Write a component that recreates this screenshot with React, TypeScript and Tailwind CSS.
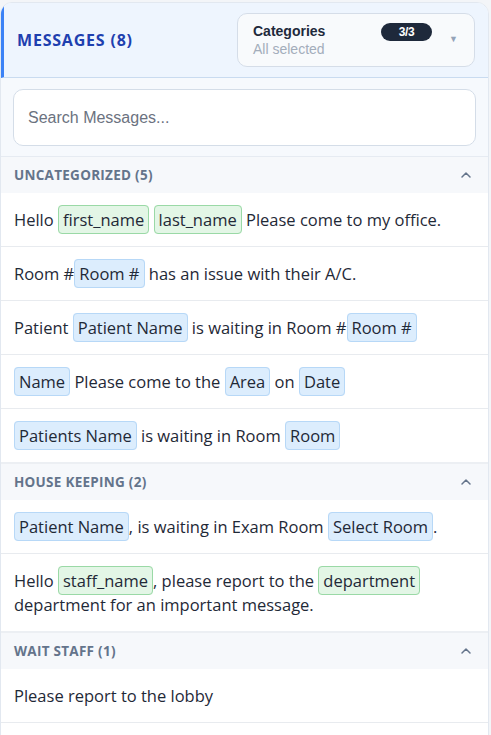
import { ChevronUp } from 'lucide-react';

type Part = string | { tag: string; color: 'blue' | 'green' };

interface Group {
  title: string;
  messages: Part[][];
}

const groups: Group[] = [
  {
    title: 'Uncategorized',
    messages: [
      ['Hello ', { tag: 'first_name', color: 'green' }, ' ', { tag: 'last_name', color: 'green' }, ' Please come to my office.'],
      ['Room #', { tag: 'Room #', color: 'blue' }, ' has an issue with their A/C.'],
      ['Patient ', { tag: 'Patient Name', color: 'blue' }, ' is waiting in Room #', { tag: 'Room #', color: 'blue' }],
      [{ tag: 'Name', color: 'blue' }, ' Please come to the ', { tag: 'Area', color: 'blue' }, ' on ', { tag: 'Date', color: 'blue' }],
      [{ tag: 'Patients Name', color: 'blue' }, ' is waiting in Room ', { tag: 'Room', color: 'blue' }],
    ],
  },
  {
    title: 'House Keeping',
    messages: [
      [{ tag: 'Patient Name', color: 'blue' }, ', is waiting in Exam Room ', { tag: 'Select Room', color: 'blue' }, '.'],
      ['Hello ', { tag: 'staff_name', color: 'green' }, ', please report to the ', { tag: 'department', color: 'green' }, ' department for an important message.'],
    ],
  },
  {
    title: 'Wait Staff',
    messages: [['Please report to the lobby']],
  },
];

function Chip({ tag, color }: { tag: string; color: 'blue' | 'green' }) {
  return (
    <span
      className={`rounded-[4px] border px-[4px] py-[2px] ${
        color === 'green' ? 'bg-[#e3f6e6] border-[#9ad9a6]' : 'bg-[#dcedfd] border-[#b7d8f7]'
      }`}
    >
      {tag}
    </span>
  );
}

export default function App() {
  const total = groups.reduce((n, g) => n + g.messages.length, 0);

  return (
    <div className="min-h-screen bg-[#f3f5f8] font-['Liberation_Sans',sans-serif]">
      <div className="w-[489px] pt-[2px]">
        <div className="rounded-t-[12px] border border-[#e2e8f0] bg-white overflow-hidden">
          {/* header */}
          <div className="flex h-[75px] items-center justify-between border-b border-[#c9dbf0] border-l-[3px] border-l-[#3b82f6] bg-[#eef5fe] pl-[13px] pr-[13px]">
            <h2 className="font-['Open_Sans',sans-serif] text-[16px] font-bold tracking-[0.05em] text-[#1e40af]">
              MESSAGES ({total})
            </h2>
            <button className="flex h-[54px] w-[238px] items-center rounded-[10px] border border-[#d5dde8] bg-[#f8fafc] pl-[15px] pr-[16px] text-left">
              <div className="flex-1">
                <div className="text-[14px] font-bold leading-[18px] text-[#1e293b]">Categories</div>
                <div className="text-[14px] leading-[18px] text-[#a3adbb]">All selected</div>
              </div>
              <span className="mb-[16px] rounded-full bg-[#1e293b] px-[18px] text-[12px] font-bold leading-[18px] tracking-[-0.04em] text-white">
                3/3
              </span>
              <span className="ml-[17px] text-[9px] text-[#94a3b8]">▼</span>
            </button>
          </div>

          {/* search */}
          <div className="bg-[#f6f9fd] px-[12px] pt-[11px] pb-[10px]">
            <input
              placeholder="Search Messages..."
              className="h-[57px] w-full rounded-[10px] border border-[#d4dde8] bg-white px-[14px] text-[16px] text-[#334155] placeholder:text-[#6b7280] outline-none"
            />
          </div>

          {groups.map((g, gi) => (
            <div key={g.title} className={gi > 0 ? 'border-t-[2px] border-[#eceff3]' : 'border-t border-[#e6ebf2]'}>
              <div className="flex h-[36px] items-center justify-between bg-[#f6f8fb] pl-[13px] pr-[14px]">
                <span className="font-['Open_Sans',sans-serif] text-[13.5px] font-bold uppercase tracking-[0.02em] text-[#64748b]">
                  {g.title} ({g.messages.length})
                </span>
                <ChevronUp size={16} strokeWidth={2.25} className="text-[#64748b]" />
              </div>
              {g.messages.map((m, mi) => (
                <div
                  key={mi}
                  className="border-b border-[#e8ebef] px-[13px] pt-[15px] pb-[14px] font-['Open_Sans',sans-serif] text-[16.5px] leading-[24px] text-[#1f2937] last:border-b-0"
                >
                  {m.map((p, pi) =>
                    typeof p === 'string' ? <span key={pi}>{p}</span> : <Chip key={pi} tag={p.tag} color={p.color} />
                  )}
                </div>
              ))}
            </div>
          ))}
          <div className="h-[14px] border-t border-[#e8ebef]" />
        </div>
      </div>
    </div>
  );
}
